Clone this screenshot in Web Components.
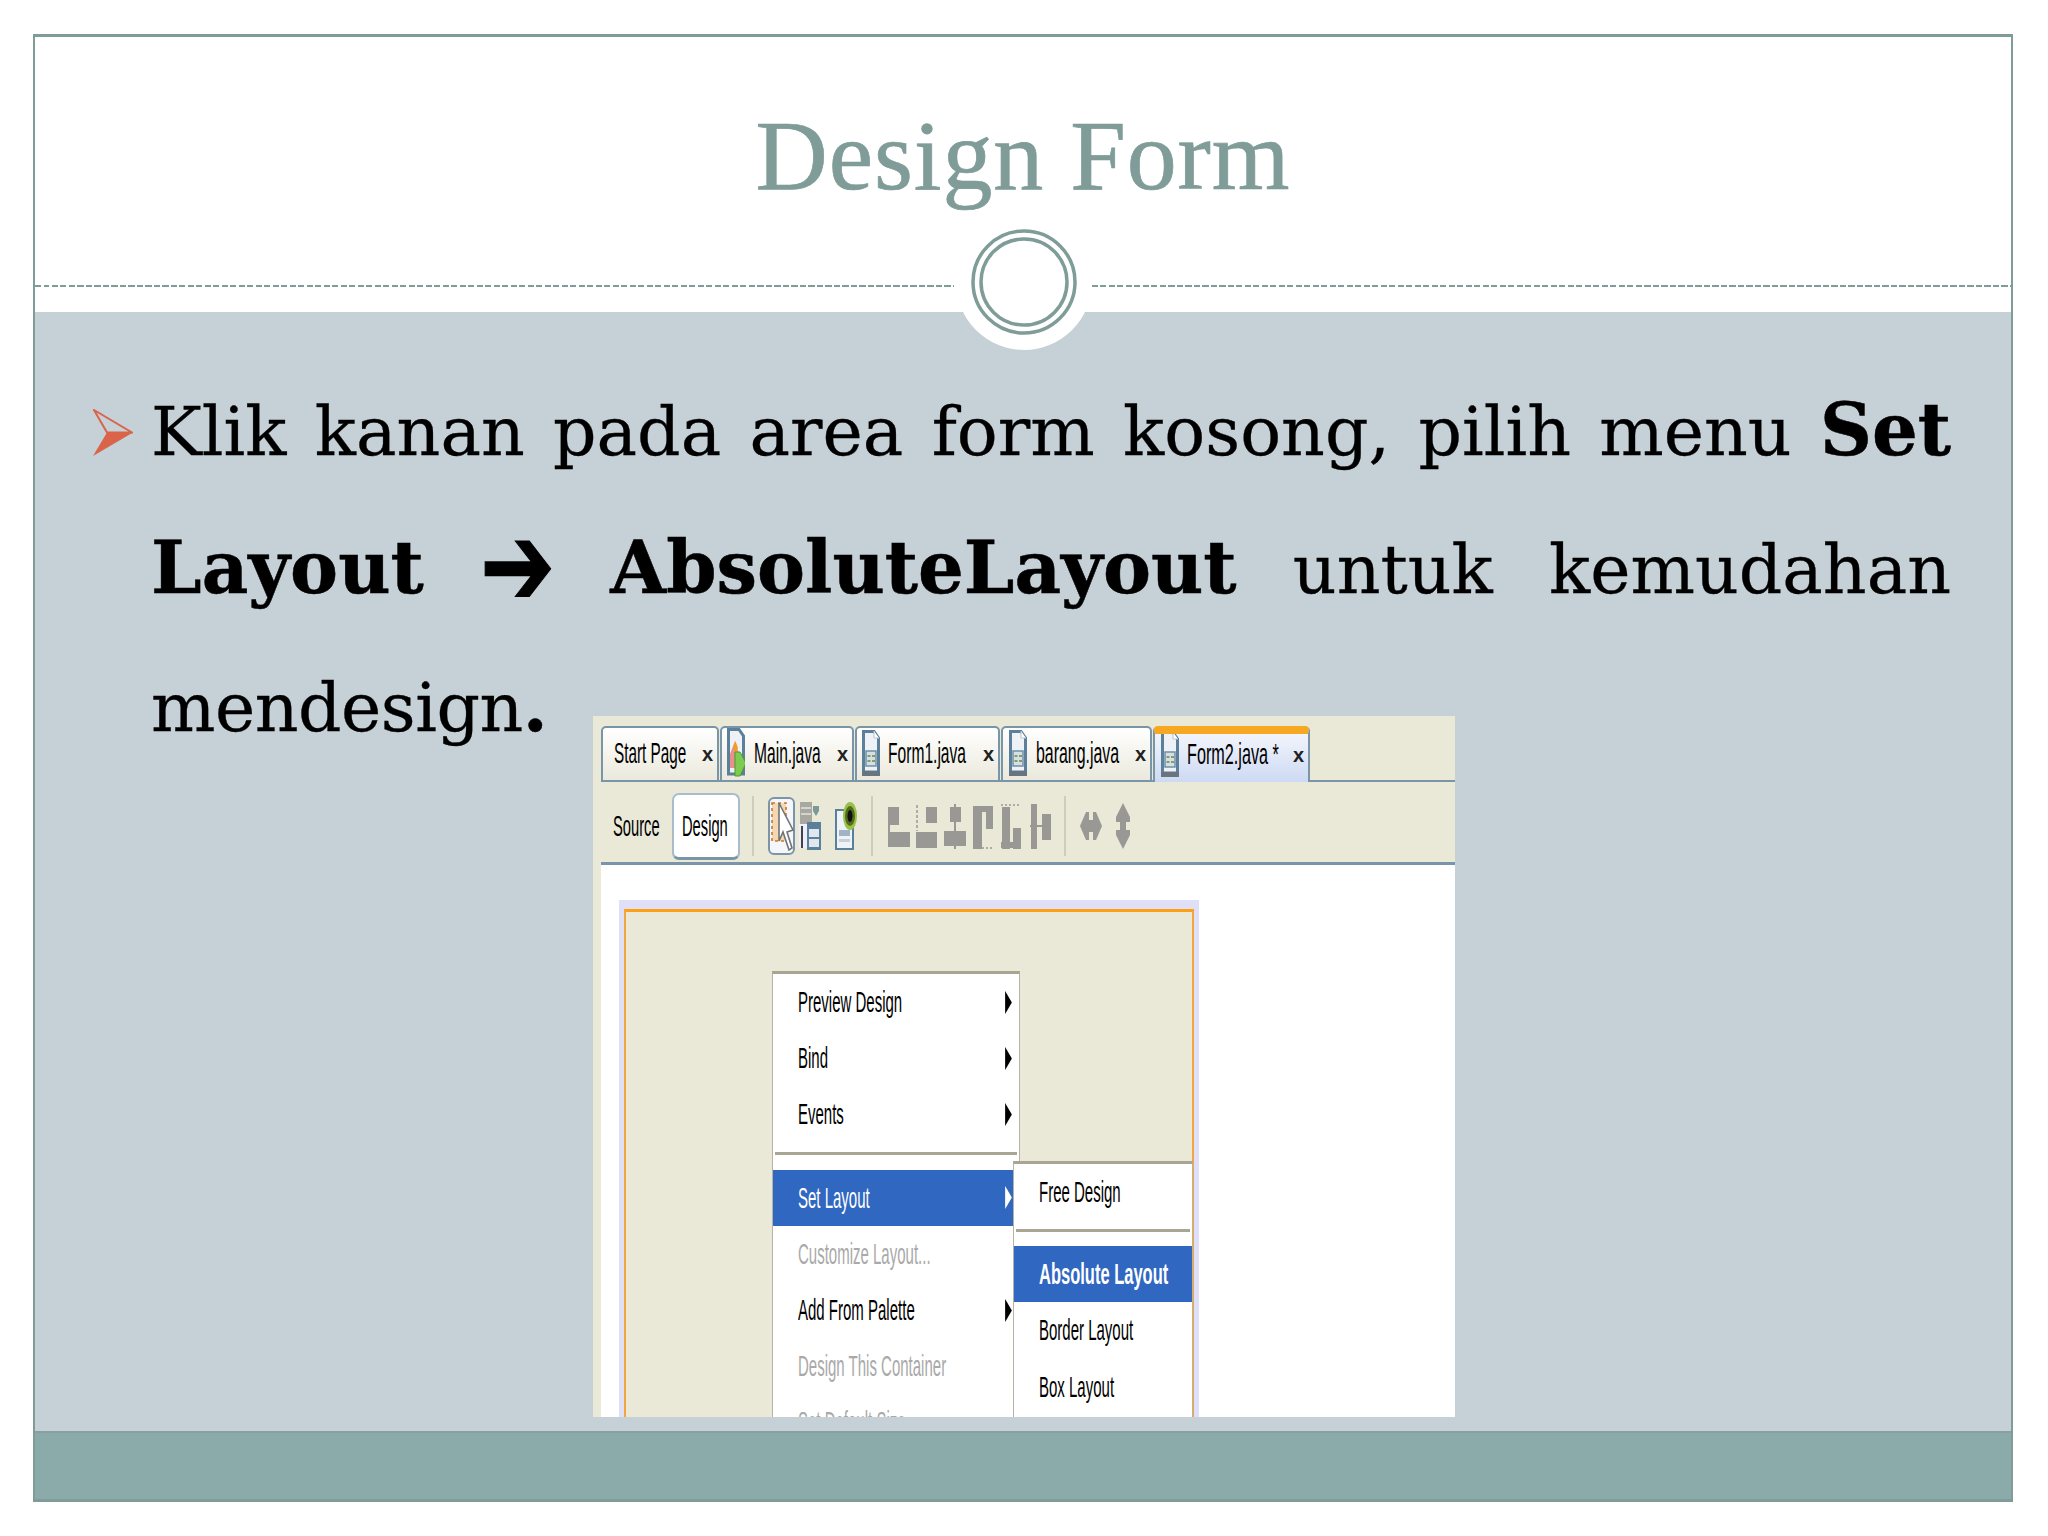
<!DOCTYPE html>
<html lang="id"><head><meta charset="utf-8"><title>Design Form</title>
<style>
html,body{margin:0;padding:0;background:#fff}
body{width:2048px;height:1536px;overflow:hidden}
b{font-weight:700;font-size:72px;line-height:0;-webkit-text-stroke:.5px #000}
</style></head>
<body>
<slide-frame>
  <slide-header slot="header">Design Form</slide-header>
  <bullet-item>
    <text-line>Klik kanan pada area form kosong, pilih menu <b>Set</b></text-line>
    <text-line><b>Layout <arrow-glyph>➔</arrow-glyph> AbsoluteLayout</b> untuk kemudahan</text-line>
    <text-line last>mendesign<b>.</b></text-line>
  </bullet-item>
  <ide-shot slot="overlay"></ide-shot>
</slide-frame>
<script>
function el(name, css, html){
  customElements.define(name, class extends HTMLElement{
    constructor(){super();this.attachShadow({mode:'open'}).innerHTML='<style>'+css+'</style>'+(typeof html==='function'?html(this):html);}
  });
}
const TEAL='#7f9c98';
el('slide-frame',`
:host{display:grid;box-sizing:border-box;width:1980px;height:1468px;margin:34px 0 0 33px;border:2px solid ${TEAL};border-top-width:3px;border-bottom-width:3px;background:#c5d0d7;grid-template-rows:275px minmax(0,1fr) 68px;grid-template-columns:minmax(0,1fr);position:relative}
.body{position:relative;background:#c5d0d7;min-width:0}
footer{background:#8babab;border-top:2px solid #8a9fa3}
`,`<slot name="header"></slot><div class="body"><slot></slot><slot name="overlay"></slot></div><footer></footer>`);
el('slide-header',`
:host{display:flex;flex-direction:column;background:#fff;position:relative;z-index:1}
h1{margin:0;height:248px;box-sizing:border-box;padding-top:59px;text-align:center;font:400 100px/120px "Liberation Serif",serif;letter-spacing:.9px;color:${TEAL};-webkit-text-stroke:.7px ${TEAL}}
.rule{display:flex;justify-content:space-between}
.rule i{display:block;width:919px;height:2px;background:repeating-linear-gradient(90deg,${TEAL} 0 6px,transparent 6px 8.5px)}
.orn{position:absolute;left:921px;top:177px;width:136px;height:136px}
`,`<h1><slot></slot></h1><div class="rule"><i></i><i></i></div>
<svg class="orn" viewBox="0 0 136 136"><circle cx="68" cy="68" r="68" fill="#fff"/><circle cx="68" cy="68" r="51" fill="none" stroke="${TEAL}" stroke-width="3.5"/><circle cx="68" cy="68" r="43" fill="none" stroke="${TEAL}" stroke-width="3.5"/></svg>`);
el('bullet-item',`
:host{display:block;position:relative;padding:51px 60px 0 116px;font:400 68px/138px "DejaVu Serif",serif;color:#000;-webkit-text-stroke:.3px #000}
svg{position:absolute;left:58px;top:97px;width:40px;height:47px}
`,`<svg viewBox="0 0 40 47"><path d="M1 1L39 23.5L14 23.5Z" fill="none" stroke="#d9644a" stroke-width="2"/><path d="M0 47L14 23.5L40 23.5Z" fill="#d9644a"/></svg><slot></slot>`);
el('text-line',`:host{display:block;text-align:justify;text-align-last:justify;white-space:nowrap}:host([last]){text-align-last:left;letter-spacing:-.5px}`,`<slot></slot>`);
el('arrow-glyph',`:host{display:inline-block;font-family:"DejaVu Sans",sans-serif;font-weight:700;font-size:80px;line-height:0;transform:scale(1.12,1.45);-webkit-text-stroke:.8px #000}`,`<slot></slot>`);

el('sq-text',`
:host{display:block;flex:none;white-space:nowrap;font:400 30px/1 "Liberation Sans",sans-serif;color:var(--c,#000);transform:scaleX(var(--s,.5));transform-origin:0 50%}
:host([bold]){font-weight:700}
`,`<slot></slot>`);

const ICONS={
 doc:`<svg viewBox="0 0 18 46"><path d="M1.5 1.5H12L16.5 8V42H1.5Z" fill="#eef2f6" stroke="#5c7f9b" stroke-width="3"/><path d="M12 1V8H17" fill="#fff" stroke="#b8c8d4"/><rect x="4" y="21" width="10" height="15" fill="#d5e0e2" stroke="#6d8fa8" stroke-width="1.5"/><path d="M5.5 26h3M10 26h3M5.5 31h3M10 31h3" stroke="#8a9a6a" stroke-width="2"/><rect x="0" y="41" width="18" height="5" fill="#68757f"/></svg>`,
 main:`<svg viewBox="0 0 18 50"><path d="M1.5 1.5H12L16.5 8V46H1.5Z" fill="#eef2f6" stroke="#5c7f9b" stroke-width="3"/><path d="M3 26L8 13L12 26V40H3Z" fill="#e88f8f"/><path d="M6 20L8.5 13L11 20L8.5 25Z" fill="#f0a020"/><path d="M8 24H13L19 35L13 48H8Z" fill="#7ecb52" stroke="#4d9a2a"/></svg>`,
 select:`<svg viewBox="0 0 27 58"><rect x="1" y="1" width="25" height="56" rx="5" fill="#f4f6fb" stroke="#7a95a8" stroke-width="2"/><rect x="4" y="6" width="14" height="38" fill="#f6d7b4" stroke="#c87a28" stroke-width="1.6" stroke-dasharray="3 3"/><path d="M11 6V44L15 35L21 53L24 51L19 35L25 33Z" fill="#fff" stroke="#6e7478" stroke-width="1.6"/></svg>`,
 preview:`<svg viewBox="0 0 22 48"><rect x="1" y="0" width="12" height="26" fill="#a8a8a0"/><path d="M2 6h10M2 12h10" stroke="#fff"/><path d="M14 4h6v5l-3 5-3-5Z" fill="#7a9a9a"/><rect x="0" y="22" width="8" height="24" fill="#eef"/><path d="M3 24v22" stroke="#444" stroke-width="2"/><rect x="8" y="20" width="14" height="28" fill="#5c7f9b"/><rect x="10" y="27" width="10" height="8" fill="#dfe8ef"/><rect x="10" y="37" width="10" height="8" fill="#dfe8ef"/></svg>`,
 eye:`<svg viewBox="0 0 22 48"><rect x="1" y="8" width="17" height="39" fill="#eef3f7" stroke="#5c7f9b" stroke-width="2"/><rect x="4" y="28" width="11" height="6" fill="#9fb4c5"/><rect x="4" y="37" width="11" height="3" fill="#c5d0d7"/><ellipse cx="15" cy="14" rx="7" ry="14" fill="#9ac04a"/><ellipse cx="15" cy="14" rx="5" ry="10" fill="#4f6d1a"/><ellipse cx="15" cy="14" rx="2.5" ry="6" fill="#111"/></svg>`,
 a1:`<svg viewBox="0 0 22 45" fill="#9a9894"><rect x="0" y="3" width="11" height="18"/><rect x="0" y="28" width="22" height="15"/><rect x="0" y="21" width="2" height="8"/></svg>`,
 a2:`<svg viewBox="0 0 21 45" fill="#9a9894"><rect x="10" y="3" width="11" height="16"/><rect x="0" y="28" width="21" height="16"/><path d="M1 1V27" stroke="#9a9894" stroke-width="1.5" stroke-dasharray="3 2"/></svg>`,
 a3:`<svg viewBox="0 0 22 45" fill="#9a9894"><rect x="6" y="3" width="11" height="15"/><rect x="0" y="27" width="22" height="15"/><rect x="10" y="0" width="2" height="45"/></svg>`,
 a4:`<svg viewBox="0 0 20 45" fill="#9a9894"><rect x="0" y="2" width="20" height="6"/><rect x="0" y="2" width="9" height="43"/><rect x="13" y="2" width="7" height="23"/><path d="M9 44H20" stroke="#9a9894" stroke-width="1.5" stroke-dasharray="2 2"/></svg>`,
 a5:`<svg viewBox="0 0 20 45" fill="#9a9894"><rect x="1" y="3" width="8" height="42"/><rect x="12" y="24" width="8" height="21"/><rect x="0" y="38" width="20" height="6"/><path d="M0 1H20" stroke="#9a9894" stroke-width="1.5" stroke-dasharray="2 2"/></svg>`,
 a6:`<svg viewBox="0 0 21 45" fill="#9a9894"><rect x="1" y="0" width="6" height="45"/><rect x="0" y="21" width="21" height="2"/><rect x="12" y="10" width="9" height="26"/></svg>`,
 h:`<svg viewBox="0 0 22 36" fill="#9a9894"><path d="M0 18L6 4H9V12H13V4H16L22 18L16 32H13V24H9V32H6Z"/></svg>`,
 v:`<svg viewBox="0 0 14 46" fill="#9a9894"><path d="M7 0L14 14V19H10V27H14V32L7 46L0 32V27H4V19H0V14Z"/></svg>`
};
el('ide-icon',`:host{display:block;flex:none;width:var(--w);height:var(--h);margin-left:var(--m,0)}svg{display:block;width:100%;height:100%}`,
  h=>ICONS[h.getAttribute('name')]);

el('ide-tab',`
:host{display:flex;align-items:center;box-sizing:border-box;height:56px;border:2px solid #7a95a8;border-radius:5px 5px 0 0;background:linear-gradient(#fff,#ebe9dc);padding:0 4px 0 11px;position:relative;flex:none;margin-right:1px;overflow:hidden}
:host([active]){background:linear-gradient(#f2f4fb,#cddaf4);border-bottom:0;border-top:8px solid #f7a823;padding-left:6px}
.x{margin-left:auto;font:700 20px/1 "Liberation Sans",sans-serif;flex:none;color:#222}
.t{flex:none;display:flex;align-items:center;height:100%;margin-top:-2px}
:host([active]) .t{margin-top:-8px}
:host([active]) .x{margin-top:-6px}
`,`<div class="t"><slot></slot></div><span class="x">x</span>`);

el('ide-sep',`:host{display:block;flex:none;width:2px;height:60px;background:#cfccbb;margin-left:var(--m,0)}`,``);

el('ide-menu',`
:host{display:block;position:absolute;box-sizing:border-box;background:#fff;border-top:3px solid #a8a593;border-left:1.5px solid #b5b3a4;border-right:1.5px solid #b5b3a4;left:var(--l);top:var(--t);width:var(--wd);z-index:var(--z,1)}
`,`<slot></slot>`);
el('menu-row',`
:host{display:flex;align-items:center;justify-content:space-between;box-sizing:border-box;height:56.2px;padding:0 5px 0 25px;color:#000}
:host([hi]){background:#3067c0;color:#fff;--c:#fff}
:host([off]){--c:#a9a9a9}
.a{display:block;width:7px;height:23px;flex:none;margin-right:2px;visibility:hidden}
:host([sub]) .a{visibility:visible}
.l{flex:1;min-width:0}
`,`<div class="l"><slot></slot></div><svg class="a" viewBox="0 0 7 24"><path d="M0 0L7 12L0 24Z" fill="currentColor"/></svg>`);
el('menu-sep',`:host{display:block;box-sizing:border-box;height:var(--h,27px);padding:var(--p,9px) 2px 0}i{display:block;height:3px;background:#a8a593}`,`<i></i>`);

el('ide-shot',`
:host{display:block;position:absolute;left:558px;top:404px;width:862px;height:701px;overflow:hidden;background:#eae8d7;box-sizing:border-box;padding:10px 0 0 8px}
.tabs{display:flex;border-bottom:2px solid #7a95a8;height:54px}
.tabs ide-tab{margin-bottom:-2px}
.bar{display:flex;align-items:center;height:83px;border-bottom:3px solid #7a95a8;box-sizing:border-box;padding:8px 0 0 12px}
.design{flex:none;box-sizing:border-box;width:68px;height:67px;margin-left:59px;background:#fff;border:2px solid #a9bccb;border-bottom:3px solid #7a95a8;border-radius:7px;display:flex;align-items:center;padding-left:8px}
.src{width:0}
.canvas{background:#fff;height:570px;padding:35px 0 0 18px;box-sizing:border-box}
.lav{width:580px;height:100%;background:#e0dff8;padding:9px 5px 0;box-sizing:border-box}
.form{position:relative;height:100%;box-sizing:border-box;background:#eae8d7;border:2px solid #f2a640;border-top:3px solid #ff9f12;border-bottom:0}
`,`
<div class="tabs">
 <ide-tab style="width:118px"><sq-text style="--s:.51;width:72px">Start Page</sq-text></ide-tab>
 <ide-tab style="width:134px;padding-left:5px"><ide-icon name="main" style="--w:18px;--h:50px"></ide-icon><sq-text style="--s:.52;width:66px;margin-left:9px">Main.java</sq-text></ide-tab>
 <ide-tab style="width:145px;padding-left:5px"><ide-icon name="doc" style="--w:18px;--h:46px"></ide-icon><sq-text style="--s:.52;width:78px;margin-left:8px">Form1.java</sq-text></ide-tab>
 <ide-tab style="width:151px;padding-left:6px"><ide-icon name="doc" style="--w:18px;--h:46px"></ide-icon><sq-text style="--s:.53;width:82px;margin-left:9px">barang.java</sq-text></ide-tab>
 <ide-tab active style="width:157px"><ide-icon name="doc" style="--w:18px;--h:46px"></ide-icon><sq-text style="--s:.54;width:90px;margin-left:8px">Form2.java *</sq-text></ide-tab>
</div>
<div class="bar">
 <div class="src"><sq-text style="--s:.49">Source</sq-text></div>
 <div class="design"><sq-text style="--s:.49">Design</sq-text></div>
 <ide-sep style="--m:12px"></ide-sep>
 <ide-icon name="select" style="--w:27px;--h:58px;--m:14px"></ide-icon>
 <ide-icon name="preview" style="--w:22px;--h:48px;--m:4px"></ide-icon>
 <ide-icon name="eye" style="--w:22px;--h:48px;--m:14px"></ide-icon>
 <ide-sep style="--m:14px"></ide-sep>
 <ide-icon name="a1" style="--w:22px;--h:45px;--m:15px"></ide-icon>
 <ide-icon name="a2" style="--w:21px;--h:45px;--m:6px"></ide-icon>
 <ide-icon name="a3" style="--w:22px;--h:45px;--m:7px"></ide-icon>
 <ide-icon name="a4" style="--w:20px;--h:45px;--m:7px"></ide-icon>
 <ide-icon name="a5" style="--w:20px;--h:45px;--m:8px"></ide-icon>
 <ide-icon name="a6" style="--w:21px;--h:45px;--m:9px"></ide-icon>
 <ide-sep style="--m:13px"></ide-sep>
 <ide-icon name="h" style="--w:22px;--h:36px;--m:14px"></ide-icon>
 <ide-icon name="v" style="--w:14px;--h:46px;--m:14px"></ide-icon>
</div>
<div class="canvas"><div class="lav"><div class="form">
 <ide-menu style="--l:146px;--t:59px;--wd:248px;height:482px">
  <menu-row sub><sq-text>Preview Design</sq-text></menu-row>
  <menu-row sub><sq-text>Bind</sq-text></menu-row>
  <menu-row sub><sq-text>Events</sq-text></menu-row>
  <menu-sep></menu-sep>
  <menu-row sub hi><sq-text>Set Layout</sq-text></menu-row>
  <menu-row off><sq-text>Customize Layout...</sq-text></menu-row>
  <menu-row sub><sq-text>Add From Palette</sq-text></menu-row>
  <menu-row off><sq-text>Design This Container</sq-text></menu-row>
  <menu-row off><sq-text>Set Default Size</sq-text></menu-row>
 </ide-menu>
 <ide-menu style="--l:387px;--t:249px;--wd:180px;--z:2;height:300px">
  <menu-row><sq-text>Free Design</sq-text></menu-row>
  <menu-sep style="--h:26px;--p:9px"></menu-sep>
  <menu-row hi><sq-text bold style="--s:.55">Absolute Layout</sq-text></menu-row>
  <menu-row><sq-text>Border Layout</sq-text></menu-row>
  <menu-row><sq-text>Box Layout</sq-text></menu-row>
 </ide-menu>
</div></div></div>`);
</script>
</body></html>
